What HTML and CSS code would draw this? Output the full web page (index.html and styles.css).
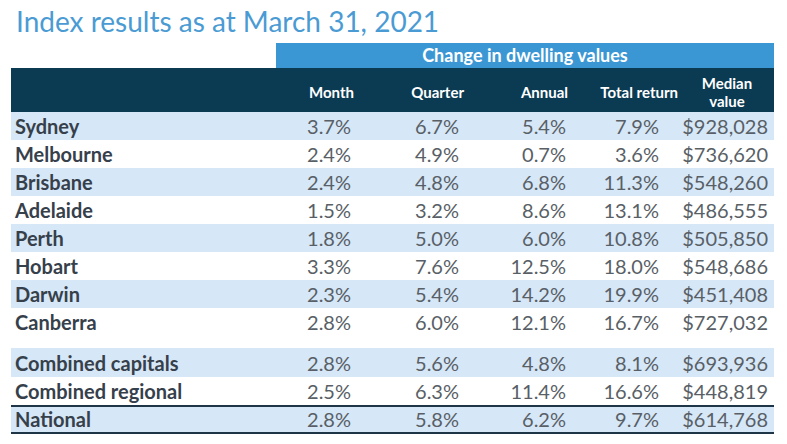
FILE: index.html
```html
<!DOCTYPE html>
<html>
<head>
<meta charset="utf-8">
<link rel="stylesheet" href="styles.css">
</head>
<body>
<div class="page">
  <h1 class="title">Index results as at March 31, 2021</h1>
  <div class="band-row">
    <div class="band-spacer"></div>
    <div class="band">Change in dwelling values</div>
  </div>
  <div class="head grid">
    <div></div>
    <div class="h h-month">Month</div>
    <div class="h h-quarter">Quarter</div>
    <div class="h h-annual">Annual</div>
    <div class="h h-total"><span>Total return</span></div>
    <div class="h h-median">Median<br>value</div>
  </div>
  <div class="row grid shade"><div class="lbl">Sydney</div><div class="v">3.7%</div><div class="v">6.7%</div><div class="v">5.4%</div><div class="v">7.9%</div><div class="v">$928,028</div></div>
  <div class="row grid"><div class="lbl">Melbourne</div><div class="v">2.4%</div><div class="v">4.9%</div><div class="v">0.7%</div><div class="v">3.6%</div><div class="v">$736,620</div></div>
  <div class="row grid shade"><div class="lbl">Brisbane</div><div class="v">2.4%</div><div class="v">4.8%</div><div class="v">6.8%</div><div class="v">11.3%</div><div class="v">$548,260</div></div>
  <div class="row grid"><div class="lbl">Adelaide</div><div class="v">1.5%</div><div class="v">3.2%</div><div class="v">8.6%</div><div class="v">13.1%</div><div class="v">$486,555</div></div>
  <div class="row grid shade"><div class="lbl">Perth</div><div class="v">1.8%</div><div class="v">5.0%</div><div class="v">6.0%</div><div class="v">10.8%</div><div class="v">$505,850</div></div>
  <div class="row grid"><div class="lbl">Hobart</div><div class="v">3.3%</div><div class="v">7.6%</div><div class="v">12.5%</div><div class="v">18.0%</div><div class="v">$548,686</div></div>
  <div class="row grid shade"><div class="lbl">Darwin</div><div class="v">2.3%</div><div class="v">5.4%</div><div class="v">14.2%</div><div class="v">19.9%</div><div class="v">$451,408</div></div>
  <div class="row grid"><div class="lbl">Canberra</div><div class="v">2.8%</div><div class="v">6.0%</div><div class="v">12.1%</div><div class="v">16.7%</div><div class="v">$727,032</div></div>
  <div class="gap"></div>
  <div class="row grid shade tall"><div class="lbl">Combined capitals</div><div class="v">2.8%</div><div class="v">5.6%</div><div class="v">4.8%</div><div class="v">8.1%</div><div class="v">$693,936</div></div>
  <div class="row grid"><div class="lbl">Combined regional</div><div class="v">2.5%</div><div class="v">6.3%</div><div class="v">11.4%</div><div class="v">16.6%</div><div class="v">$448,819</div></div>
  <div class="row grid shade national"><div class="lbl">National</div><div class="v">2.8%</div><div class="v">5.8%</div><div class="v">6.2%</div><div class="v">9.7%</div><div class="v">$614,768</div></div>
</div>
</body>
</html>
```
FILE: styles.css
```css
html, body {
  margin: 0;
  padding: 0;
  background: #ffffff;
}
.page {
  padding-left: 11px;
  width: 763px;
  font-family: Lato, "Open Sans", sans-serif;
}
.title {
  margin: 0;
  height: 43px;
  padding-left: 5px;
  font-size: 28px;
  font-weight: 400;
  line-height: 43px;
  color: #4a9bd4;
  box-sizing: border-box;
  padding-bottom: 6px;
  white-space: nowrap;
}
.band-row {
  display: flex;
  height: 25px;
}
.band-spacer {
  width: 265px;
}
.band {
  flex: 1;
  background: #3b97d4;
  color: #ffffff;
  font-weight: 700;
  font-size: 18px;
  line-height: 25px;
  text-align: center;
}
.grid {
  display: grid;
  grid-template-columns: 265px 81px 108px 107px 93px 109px;
  align-items: center;
}
.head {
  height: 44px;
  background: #0b3b53;
  color: #ffffff;
  font-weight: 700;
  font-size: 15px;
  line-height: 18px;
  padding-top: 3px;
  box-sizing: border-box;
}
.h {
  text-align: right;
  white-space: nowrap;
}
.h-month { padding-right: 3px; }
.h-quarter { padding-right: 1px; }
.h-annual { padding-right: 4px; }
.h-total {
  display: flex;
  justify-content: flex-end;
}
.h-total span { margin-right: -13px; }
.h-median {
  text-align: center;
  padding-left: 15px;
}
.row {
  height: 28px;
  font-size: 20px;
  line-height: 28px;
}
.row.tall { height: 29px; }
.shade { background: #d6e7f7; }
.lbl {
  padding-left: 4px;
  font-weight: 700;
  color: #36404b;
  white-space: nowrap;
}
.v {
  text-align: right;
  padding-right: 6px;
  color: #595f66;
}
.gap { height: 12px; }
.national {
  border-top: 2px solid #1e3547;
  border-bottom: 2px solid #1e3547;
  box-sizing: content-box;
  height: 25px;
  line-height: 25px;
}
```
